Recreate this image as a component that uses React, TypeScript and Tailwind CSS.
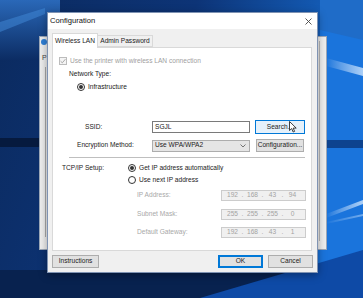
import { Fragment } from "react"

function Wallpaper() {
  return (
    <svg className="absolute inset-0" width="363" height="298" viewBox="0 0 363 298">
      <defs>
        <linearGradient id="base" x1="0" y1="0" x2="1" y2="0.3">
          <stop offset="0" stopColor="#0b2a5e" />
          <stop offset="0.5" stopColor="#0d3477" />
          <stop offset="1" stopColor="#1770d6" />
        </linearGradient>
        <linearGradient id="top" x1="0" y1="0" x2="0" y2="1">
          <stop offset="0" stopColor="#2a68b8" />
          <stop offset="1" stopColor="#0c2c63" />
        </linearGradient>
        <linearGradient id="beam" x1="0" y1="0" x2="1" y2="0">
          <stop offset="0" stopColor="#ffffff" stopOpacity="0" />
          <stop offset="1" stopColor="#cfe6ff" stopOpacity="0.8" />
        </linearGradient>
      </defs>
      <rect width="363" height="298" fill="url(#base)" />
      <rect width="60" height="60" fill="url(#top)" />
      <polygon points="0,22 45,8 45,14 0,32" fill="#3f86d6" opacity="0.55" />
      <rect x="0" y="138" width="40" height="9" fill="#061a3e" />
      <rect x="320" y="0" width="43" height="298" fill="#1a74dc" />
      <polygon points="320,0 363,0 363,40 320,30" fill="#1f6cc8" />
      <polygon points="326,58 363,68 363,76 326,66" fill="url(#beam)" />
      <rect x="320" y="140" width="43" height="8" fill="#0d438f" />
      <polygon points="326,214 363,200 363,204 326,218" fill="url(#beam)" />
      <polygon points="326,222 363,214 363,216 326,224" fill="url(#beam)" opacity="0.6" />
      <rect x="0" y="270" width="363" height="28" fill="#08224f" />
      <polygon points="200,298 363,250 363,298" fill="#0e4aa6" />
    </svg>
  )
}

function Check() {
  return (
    <span className="flex h-[8px] w-[8px] items-center justify-center border border-[#bcbcbc] bg-[#f4f4f4]">
      <svg width="6" height="6" viewBox="0 0 6 6">
        <path d="M0.6 3.2 L2.3 4.8 L5.4 1.2" fill="none" stroke="#a8a8a8" strokeWidth="1" />
      </svg>
    </span>
  )
}

function Radio({ on }: { on?: boolean }) {
  return (
    <span className="flex h-[8px] w-[8px] items-center justify-center rounded-full border border-[#333333] bg-white">
      {on && <span className="h-[4px] w-[4px] rounded-full bg-[#333333]" />}
    </span>
  )
}

function Btn({ label, className }: { label: string; className: string }) {
  return (
    <div className={`flex items-center justify-center border text-[#222222] ${className}`}>{label}</div>
  )
}

function IpBox({ parts }: { parts: string[] }) {
  return (
    <div className="ml-auto flex h-[11px] w-[85px] items-center border border-[#cccccc] bg-[#f0f0f0] pl-[2px] text-[#a3a3a3]">
      {parts.map((p, i) => (
        <Fragment key={i}>
          <span className="w-[17px] text-center">{p}</span>
          {i < 3 && <span className="w-[3px] text-center">.</span>}
        </Fragment>
      ))}
    </div>
  )
}

export default function App() {
  return (
    <div className="relative h-[298px] w-[363px] overflow-hidden font-['Liberation_Sans',Arial,sans-serif] text-[6.6px] leading-none">
      <Wallpaper />

      {/* window behind the dialog */}
      <div className="absolute left-[39px] top-[36px] h-[214px] w-[288px] border border-[#9ba7b8] bg-[#eeeeee]">
        <div className="ml-[1px] mt-[2px] h-[6px] w-[6px] rounded-full bg-[#2f7fd6]" />
        <div className="ml-[2px] mt-[9px] text-[7px] text-[#444444]">P</div>
        <div className="ml-[5px] mt-[6px] h-[170px] w-px bg-[#a9a9a9]" />
        <div className="absolute right-[6px] top-[4px] h-[200px] w-px bg-[#b8b8b8]" />
      </div>

      {/* dialog */}
      <div className="absolute left-[47px] top-[12px] flex h-[261px] w-[271px] flex-col border border-[#7f93b3] bg-[#f0f0f0] shadow-[0_2px_8px_rgba(0,0,0,0.35)]">
        <div className="flex h-[16px] items-center justify-between bg-white pl-[2px] pr-[5px]">
          <span className="text-[7.6px] text-[#111111]">Configuration</span>
          <svg width="7" height="7" viewBox="0 0 7 7">
            <path d="M0.5 0.5 L6.5 6.5 M6.5 0.5 L0.5 6.5" stroke="#444444" strokeWidth="0.9" />
          </svg>
        </div>

        <div className="px-[4px] pt-[3px]">
          <div className="flex h-[15px] items-end">
            <div className="relative z-10 -mb-px flex h-[15px] w-[46px] items-center justify-center border border-b-0 border-[#d9d9d9] bg-white text-[#222222]">
              Wireless LAN
            </div>
            <div className="flex h-[12px] w-[55px] items-center justify-center border border-l-0 border-[#d9d9d9] bg-[#f0f0f0] text-[#222222]">
              Admin Password
            </div>
          </div>

          <div className="flex h-[204px] w-[260px] flex-col border border-[#d9d9d9] bg-white text-[#222222]">
            <div className="ml-[6px] mt-[8px] flex h-[10px] items-center gap-[3px] text-[#a0a0a0]">
              <Check />
              <span>Use the printer with wireless LAN connection</span>
            </div>
            <div className="ml-[16px] mt-[3px] flex h-[10px] items-center">Network Type:</div>
            <div className="ml-[24px] mt-[3px] flex h-[10px] items-center gap-[3px]">
              <Radio on />
              <span>Infrastructure</span>
            </div>

            <div className="mt-[28px] flex h-[14px] items-center">
              <span className="ml-[32px] w-[67px]">SSID:</span>
              <div className="flex h-[12px] w-[98px] items-center border border-[#7a7a7a] pl-[2px]">SGJL</div>
              <Btn label="Search..." className="ml-[5px] h-[14px] w-[50px] border-[#0078d7] bg-[#e5f1fb]" />
            </div>
            <div className="mt-[5px] flex h-[13px] items-center">
              <span className="ml-[24px] w-[75px]">Encryption Method:</span>
              <div className="flex h-[12px] w-[98px] items-center justify-between border border-[#adadad] bg-[#e5e5e5] pl-[2px] pr-[3px]">
                <span>Use WPA/WPA2</span>
                <svg width="6" height="4" viewBox="0 0 6 4">
                  <path d="M0.5 0.5 L3 3 L5.5 0.5" fill="none" stroke="#555555" strokeWidth="0.8" />
                </svg>
              </div>
              <Btn label="Configuration..." className="ml-[6px] h-[13px] w-[48px] border-[#adadad] bg-[#e1e1e1]" />
            </div>

            <div className="ml-[16px] mt-[5px] h-px w-[236px] bg-[#bfbfbf]" />

            <div className="mt-[5px] flex h-[10px] items-center">
              <span className="ml-[9px] w-[66px]">TCP/IP Setup:</span>
              <Radio on />
              <span className="ml-[3px]">Get IP address automatically</span>
            </div>
            <div className="mt-[2px] flex h-[10px] items-center">
              <span className="ml-[75px]" />
              <Radio />
              <span className="ml-[3px]">Use next IP address</span>
            </div>

            <div className="ml-[84px] mr-[5px] mt-[5px] flex h-[11px] items-center text-[#a8a8a8]">
              <span>IP Address:</span>
              <IpBox parts={["192", "168", "43", "94"]} />
            </div>
            <div className="ml-[84px] mr-[5px] mt-[8px] flex h-[11px] items-center text-[#a8a8a8]">
              <span>Subnet Mask:</span>
              <IpBox parts={["255", "255", "255", "0"]} />
            </div>
            <div className="ml-[84px] mr-[5px] mt-[7px] flex h-[11px] items-center text-[#a8a8a8]">
              <span>Default Gateway:</span>
              <IpBox parts={["192", "168", "43", "1"]} />
            </div>
          </div>

          <div className="mt-[4px] flex items-center">
            <Btn label="Instructions" className="h-[13px] w-[47px] border-[#adadad] bg-[#e1e1e1]" />
            <Btn label="OK" className="ml-auto h-[13px] w-[45px] border-[#0078d7] bg-[#e1e1e1] shadow-[inset_0_0_0_1px_#0078d7]" />
            <Btn label="Cancel" className="ml-[5px] h-[13px] w-[45px] border-[#adadad] bg-[#e1e1e1]" />
          </div>
        </div>
      </div>

      {/* mouse pointer */}
      <svg className="absolute left-[289px] top-[121px]" width="8" height="12" viewBox="0 0 8 12">
        <path d="M0.5 0.5 L0.5 9.5 L2.7 7.6 L4.2 11 L5.6 10.4 L4.2 7.1 L7.2 7.1 Z" fill="#ffffff" stroke="#111111" strokeWidth="0.8" />
      </svg>
    </div>
  )
}
